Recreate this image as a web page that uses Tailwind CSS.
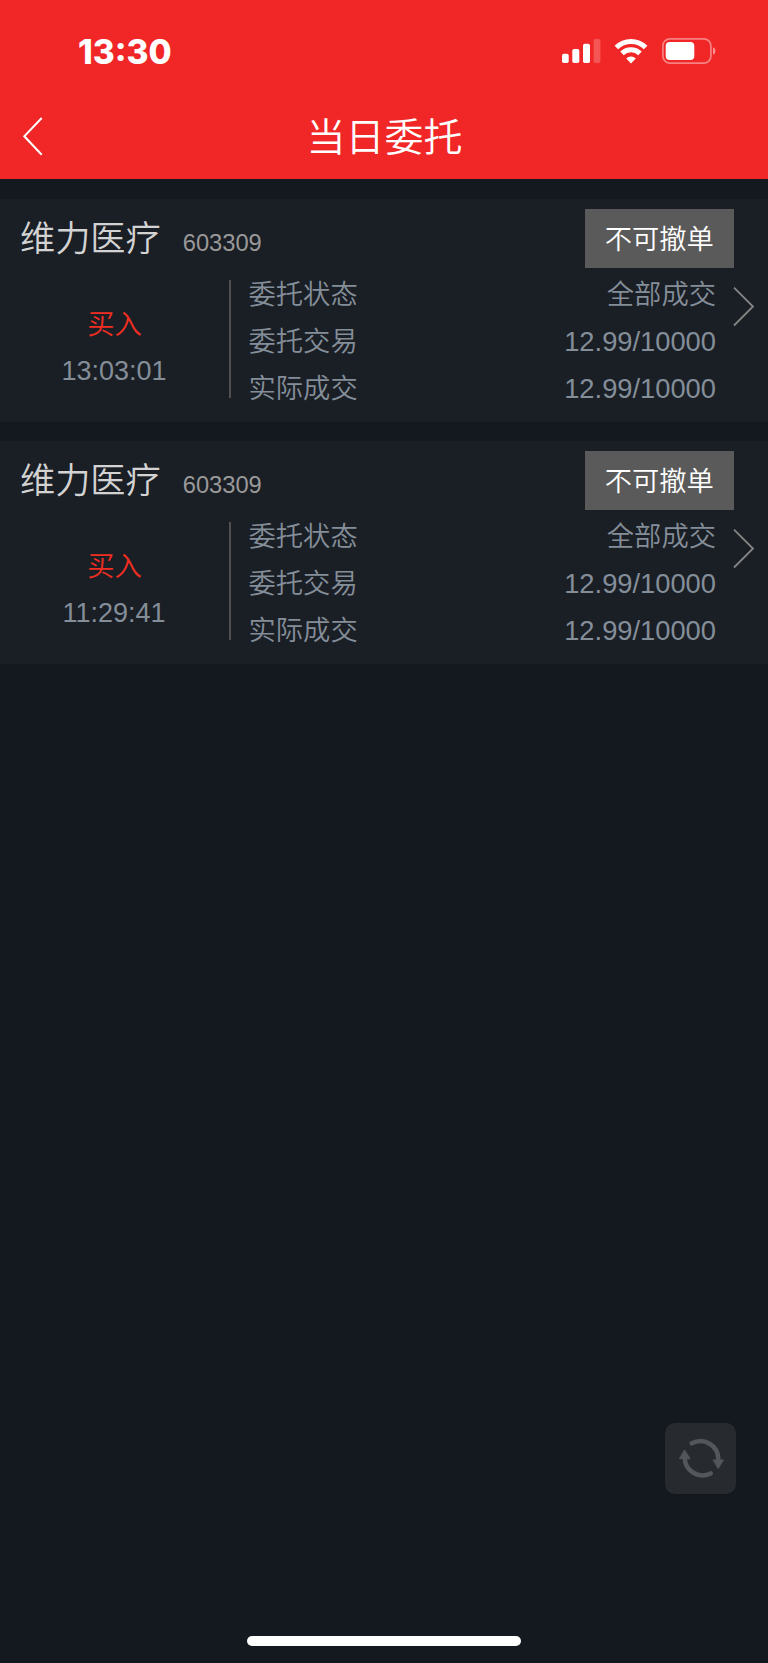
<!DOCTYPE html>
<html lang="zh-CN">
<head>
  <meta charset="UTF-8" />
  <meta name="viewport" content="width=device-width, initial-scale=1.0"/>
  <title>当日委托</title>
  <script src="https://cdn.jsdelivr.net/npm/@tailwindcss/browser@4"></script>
</head>
<body class="bg-[#141920] font-['Liberation_Sans','Noto_Sans_CJK_SC',sans-serif]">
  <div class="relative w-[768px] h-[1663px] overflow-hidden">

    <!-- Header -->
    <header class="h-[179px] bg-[#f12727] text-white">
      <div class="h-[95px] flex items-center justify-between pl-[78px] pr-[52px] pt-[7px]">
        <div class="font-['Inter',sans-serif] font-extrabold text-[33.5px] leading-10 pt-0.5">13:30</div>
        <div class="flex items-center">
          <svg class="w-[39px] h-[26px]" viewBox="0 0 39 26" fill="#fff">
            <rect x="0" y="15.7" width="6.7" height="9.3" rx="1.8"/>
            <rect x="10.3" y="11" width="7" height="14" rx="1.8"/>
            <rect x="21" y="5.7" width="7" height="19.3" rx="1.8"/>
            <rect x="31.7" y="1" width="6.7" height="24" rx="1.8" opacity=".22"/>
          </svg>
          <svg class="w-[34px] h-[26px] ml-[13px]" viewBox="0 0 34 26" fill="none" stroke="#fff" stroke-width="5">
            <path d="M2.4 9.5a20.6 20.6 0 0 1 29.2 0"/>
            <path d="M8 15.4a12.8 12.8 0 0 1 18 0"/>
            <path d="M12.2 20.4a7 7 0 0 1 9.6 0L17 25.4z" fill="#fff" stroke="none"/>
          </svg>
          <svg class="w-[54px] h-[26px] ml-[14px]" viewBox="0 0 54 26">
            <rect x=".9" y=".9" width="48" height="24.2" rx="7" fill="none" stroke="#fff" stroke-opacity=".42" stroke-width="1.7"/>
            <rect x="3.7" y="4" width="28.6" height="18" rx="4" fill="#fff"/>
            <path d="M51 9.3c3.2 1.3 3.2 6.1 0 7.4z" fill="#fff" fill-opacity=".5"/>
          </svg>
        </div>
      </div>
      <div class="h-[84px] flex items-center px-[22.5px]">
        <svg class="w-5 h-10" viewBox="0 0 20 40" fill="none" stroke="#fff" stroke-width="2"><path d="M18.7 1 1.3 19.3l17.4 18.5"/></svg>
        <h1 class="flex-1 text-center pt-px pr-[19px] text-[39px] leading-[60px] font-[350]">当日委托</h1>
      </div>
    </header>

    <main class="pt-5 flex flex-col gap-[19.5px]">
      <!-- Order -->
      <section class="h-[222.5px] bg-[#1a1e25] pt-[10px]">
        <div class="h-[59px] flex items-center pl-5 pr-[34px]">
          <h2 class="text-[35.2px] leading-[59px] text-[#d3d3d3] font-[350]">维力医疗</h2>
          <span class="ml-[22px] pt-[10px] text-[23.7px] text-[#999]">603309</span>
          <button class="ml-auto w-[149.5px] h-[59px] pt-[3px] bg-[#5a5a5a] text-white text-[27.3px] font-[350]">不可撤单</button>
        </div>
        <div class="flex text-[27.3px] leading-[47.2px] text-[#848e99] font-[350]">
          <div class="w-[229px] pt-[33px] text-center">
            <div class="text-[#f02e22]">买入</div>
            <div class="pr-px text-[27px]">13:03:01</div>
          </div>
          <div class="w-[2px] h-[118px] mt-3 bg-[#505050]"></div>
          <div class="pl-[17.5px] pt-[3px]">
            <div>委托状态</div>
            <div>委托交易</div>
            <div>实际成交</div>
          </div>
          <div class="ml-auto pt-[3px] text-right">
            <div>全部成交</div>
            <div>12.99/10000</div>
            <div>12.99/10000</div>
          </div>
          <svg class="w-[22px] h-10 mt-[19px] ml-[17px] mr-[13px]" viewBox="0 0 22 40" fill="none" stroke="#858585" stroke-width="1.8"><path d="M1 .6 20 19.5 1 38.5"/></svg>
        </div>
      </section>

      <!-- Order -->
      <section class="h-[222.5px] bg-[#1a1e25] pt-[10px]">
        <div class="h-[59px] flex items-center pl-5 pr-[34px]">
          <h2 class="text-[35.2px] leading-[59px] text-[#d3d3d3] font-[350]">维力医疗</h2>
          <span class="ml-[22px] pt-[10px] text-[23.7px] text-[#999]">603309</span>
          <button class="ml-auto w-[149.5px] h-[59px] pt-[3px] bg-[#5a5a5a] text-white text-[27.3px] font-[350]">不可撤单</button>
        </div>
        <div class="flex text-[27.3px] leading-[47.2px] text-[#848e99] font-[350]">
          <div class="w-[229px] pt-[33px] text-center">
            <div class="text-[#f02e22]">买入</div>
            <div class="pr-px text-[27px]">11:29:41</div>
          </div>
          <div class="w-[2px] h-[118px] mt-3 bg-[#505050]"></div>
          <div class="pl-[17.5px] pt-[3px]">
            <div>委托状态</div>
            <div>委托交易</div>
            <div>实际成交</div>
          </div>
          <div class="ml-auto pt-[3px] text-right">
            <div>全部成交</div>
            <div>12.99/10000</div>
            <div>12.99/10000</div>
          </div>
          <svg class="w-[22px] h-10 mt-[19px] ml-[17px] mr-[13px]" viewBox="0 0 22 40" fill="none" stroke="#858585" stroke-width="1.8"><path d="M1 .6 20 19.5 1 38.5"/></svg>
        </div>
      </section>
    </main>

    <!-- Refresh -->
    <button class="absolute right-8 bottom-[169px] w-[71px] h-[71px] rounded-[10px] bg-[#272a2f]">
      <svg class="w-full h-full" viewBox="0 0 71 71" fill="none" stroke="#53565b" stroke-width="4.6" stroke-linecap="round">
        <path d="M26.8 20.3A18 18 0 0 1 53.3 36.5"/>
        <path d="M45.7 50.5A18 18 0 0 1 19.7 34.5"/>
        <path d="M48.3 37h10.2l-5.1 8.2zM14.8 35.7H25L19.7 27.3z" fill="#53565b" stroke-width="1"/>
      </svg>
    </button>

    <!-- Home indicator -->
    <div class="absolute left-[247px] bottom-[17px] w-[274px] h-[10px] rounded-full bg-white"></div>
  </div>
</body>
</html>
